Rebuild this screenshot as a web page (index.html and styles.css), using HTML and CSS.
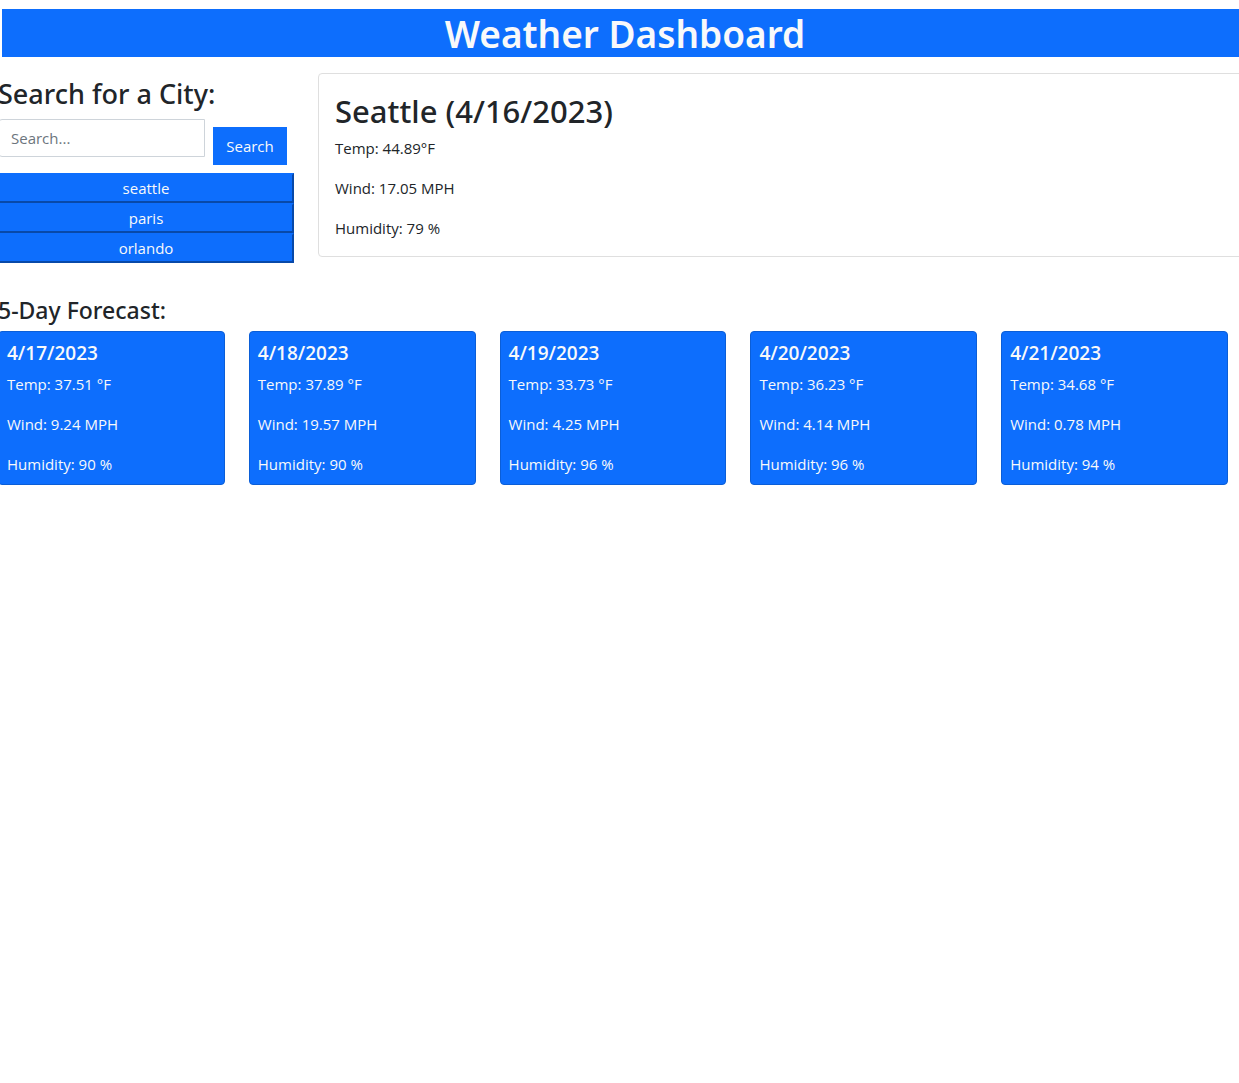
FILE: index.html
```html
<!DOCTYPE html>
<html lang="en">
<head>
<meta charset="utf-8">
<meta name="viewport" content="width=device-width, initial-scale=1">
<title>Weather Dashboard</title>
<link rel="stylesheet" href="styles.css">
</head>
<body>
<header class="banner"><h1 class="banner-title">Weather Dashboard</h1></header>
<main class="dashboard">
  <div class="overview">
    <aside class="sidebar">
      <form class="search">
        <label class="search-label" for="city">Search for a City:</label>
        <div class="search-row">
          <input class="search-input" id="city" type="text" placeholder="Search...">
          <button class="search-button" type="button">Search</button>
        </div>
      </form>
      <div class="history">
        <button class="history-button" type="button">seattle</button>
        <button class="history-button" type="button">paris</button>
        <button class="history-button" type="button">orlando</button>
      </div>
    </aside>
    <section class="current">
      <h2 class="current-title">Seattle (4/16/2023)</h2>
      <div class="readings">
        <p>Temp: 44.89°F</p>
        <p>Wind: 17.05 MPH</p>
        <p>Humidity: 79 %</p>
      </div>
    </section>
  </div>
  <section class="forecast">
    <h3 class="forecast-title">5-Day Forecast:</h3>
    <div class="days">
      <article class="day">
        <h4 class="day-date">4/17/2023</h4>
        <div class="readings"><p>Temp: 37.51 °F</p><p>Wind: 9.24 MPH</p><p>Humidity: 90 %</p></div>
      </article>
      <article class="day">
        <h4 class="day-date">4/18/2023</h4>
        <div class="readings"><p>Temp: 37.89 °F</p><p>Wind: 19.57 MPH</p><p>Humidity: 90 %</p></div>
      </article>
      <article class="day">
        <h4 class="day-date">4/19/2023</h4>
        <div class="readings"><p>Temp: 33.73 °F</p><p>Wind: 4.25 MPH</p><p>Humidity: 96 %</p></div>
      </article>
      <article class="day">
        <h4 class="day-date">4/20/2023</h4>
        <div class="readings"><p>Temp: 36.23 °F</p><p>Wind: 4.14 MPH</p><p>Humidity: 96 %</p></div>
      </article>
      <article class="day">
        <h4 class="day-date">4/21/2023</h4>
        <div class="readings"><p>Temp: 34.68 °F</p><p>Wind: 0.78 MPH</p><p>Humidity: 94 %</p></div>
      </article>
    </div>
  </section>
</main>
</body>
</html>
```
FILE: styles.css
```css
*, *::before, *::after { box-sizing: border-box; }

body {
  margin: 0;
  padding-top: 9px;
  overflow-x: hidden;
  background: #fff;
  color: #212529;
  font-family: "Segoe UI", "Open Sans", "Noto Sans", sans-serif;
  font-size: 15px;
  line-height: 24px;
}

h1, h2, h3, h4, p { margin: 0; }
button, input { font: inherit; }

.banner {
  margin: 0 -9px 16px 2px;
  background: #0d6efd;
  color: #f8f9fa;
  text-align: center;
}
.banner-title,
.search-label,
.current-title,
.forecast-title {
  font-family: "Segoe UI", "Noto Sans", "Open Sans", sans-serif;
  font-weight: 500;
}
.banner-title {
  padding-top: 2px;
  font-size: 37px;
  font-weight: 600;
  line-height: 46px;
}

/* The content bleeds slightly past the left edge of the window. */
.dashboard { margin-left: -2px; }

.overview {
  display: grid;
  grid-template-columns: 296px 1fr;
  gap: 24px;
  align-items: start;
  margin-right: -9px;
}

.sidebar { padding-top: 4px; }
.search-label {
  display: block;
  margin-bottom: 8px;
  font-size: 27px;
  line-height: 34px;
}
.search-row { display: flex; gap: 8px; margin-bottom: 8px; }
.search-input {
  width: 207px;
  height: 38px;
  padding: 6px 12px;
  border: 1px solid #ced4da;
  border-radius: 4px 0 0 4px;
  color: #212529;
}
.search-input::placeholder { color: #6c757d; opacity: 1; }
.search-button {
  width: 74px;
  height: 38px;
  margin-top: 8px;
  padding: 0;
  border: 1px solid #0d6efd;
  background: #0d6efd;
  color: #f8f9fa;
}

.history { display: flex; flex-direction: column; }
.history-button {
  height: 30px;
  padding: 0;
  border: 2px outset #0d6efd;
  background: #0d6efd;
  color: #f8f9fa;
}

.current {
  padding: 16px;
  border: 1px solid #dfdfdf;
  border-radius: 4px;
}
.current-title {
  margin-bottom: 4px;
  font-size: 31px;
  line-height: 42px;
}
.readings { display: grid; gap: 16px; }

.forecast { margin: 31px 11px 0 0; }
.forecast-title {
  margin-bottom: 4px;
  font-size: 23px;
  line-height: 33px;
}
.days { display: grid; grid-template-columns: repeat(5, 1fr); gap: 24px; }
.day {
  padding: 8px;
  border: 1px solid #0b5ed7;
  border-radius: 4px;
  background: #0d6efd;
  color: #f8f9fa;
}
.day-date {
  margin-bottom: 6px;
  font-size: 19px;
  font-weight: 600;
  line-height: 26px;
}
```
